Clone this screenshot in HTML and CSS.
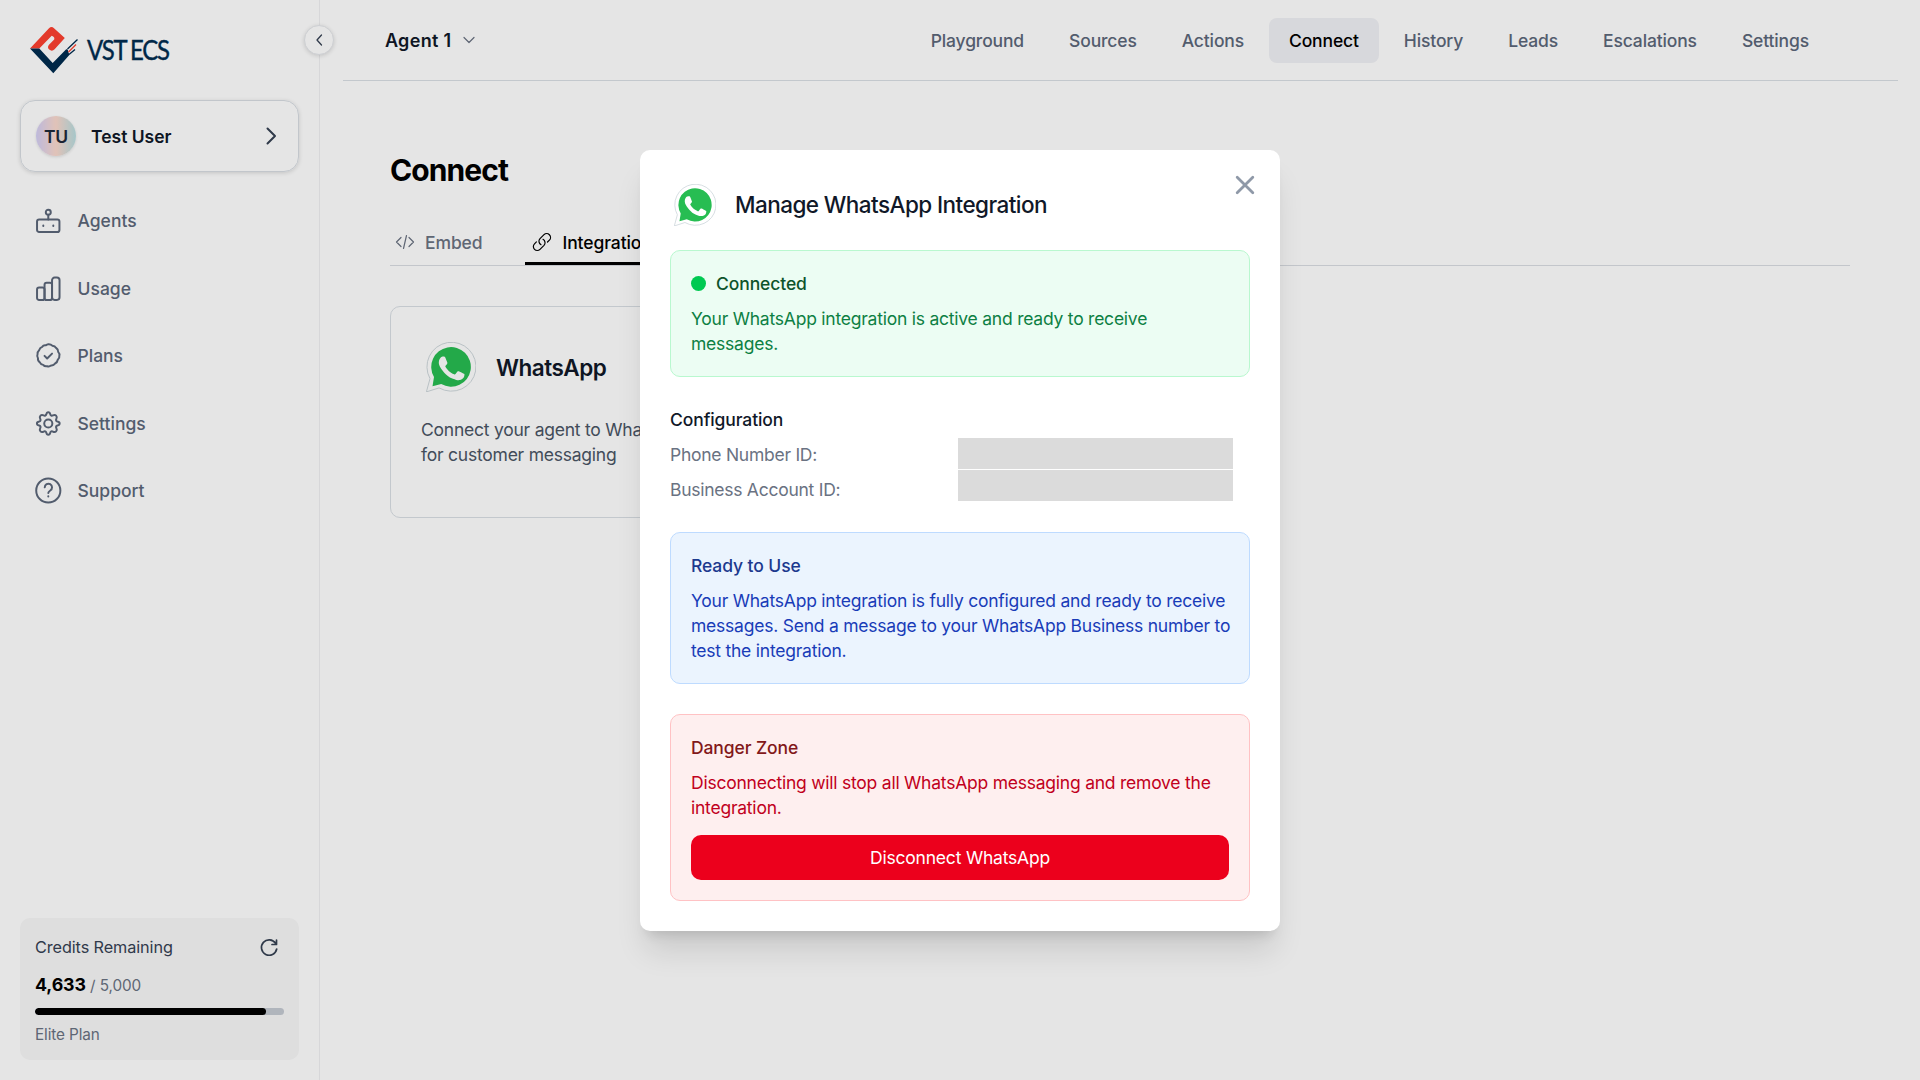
FILE: index.html
```html
<!DOCTYPE html>
<html lang="en">
<head>
  <meta charset="UTF-8">
  <meta name="viewport" content="width=device-width, initial-scale=1.0">
  <title>Connect - Agent 1</title>
  <link rel="stylesheet" href="styles.css">
</head>
<body>
  <!-- shared whatsapp logo -->
  <svg width="0" height="0" class="defs">
    <symbol id="whatsapp" viewBox="0 0 50 50">
      <path d="M.5 49.5 4 36.6A24.5 24.5 0 1 1 13.4 46.1Z" fill="#fff" stroke="#cfd8dc"/>
      <path d="M6.500 44.300 8 35A19.800 19.800 0 1 1 15.200 42.100Z" fill="#27bd52"/>
      <path fill="#fff" fill-rule="evenodd" d="M19.300 15.500c-.500-1-1-1-1.400-1h-1.200c-.400 0-1.100.200-1.700.800-.600.600-2.200 2.100-2.200 5.200s2.300 6.100 2.600 6.500c.300.400 4.400 7 10.800 9.500 5.300 2.100 6.400 1.700 7.600 1.600 1.200-.100 3.700-1.500 4.200-3 .500-1.500.500-2.700.400-3-.200-.300-.600-.400-1.200-.700-.600-.300-3.700-1.800-4.300-2.100-.600-.200-1-.300-1.400.300-.400.600-1.600 2.100-2 2.500-.400.400-.700.500-1.400.200-.600-.300-2.700-1-5.100-3.100-1.900-1.700-3.200-3.800-3.500-4.400-.400-.600 0-1 .300-1.300.300-.300.600-.700.900-1.100.300-.400.400-.600.600-1 .200-.400.100-.800-.100-1.100-.100-.300-1.400-3.400-1.900-4.800Z"/>
    </symbol>
  </svg>

  <div class="layout">
    <aside class="sidebar">
      <button class="collapse"><svg width="16" height="16" viewBox="0 0 16 16"><path d="M10.500 3 6 8l4.500 5"/></svg></button>

      <div class="logo">
        <svg width="48" height="48" viewBox="0 0 48 48">
          <path fill="#fd4130" d="M0 22.500 19 2.200Q21.500 0 24 2.200L34.800 12 24.600 23.300Q22 26 19.200 23.600 16.900 21.300 19 18.800L24.200 13.500Q25 11 21.700 9.800L9.300 22.500Z"/>
          <path fill="#002c50" d="M0 22.500H9.300L22.700 37 36.200 23.300Q38 23 38 24.500L39.300 29 23.300 47.300Z"/>
          <path stroke="#002c50" stroke-width="1.300" d="M37.500 23 47.500 13.500M39 28.500 45 23.500"/>
          <path stroke="#fd4130" stroke-width="1.300" d="M38.500 26 46 18.500"/>
        </svg>
        <span class="logo-text">VST<i></i>ECS</span>
      </div>

      <div class="user">
        <span class="avatar">TU</span>
        <span class="user-name">Test User</span>
        <svg width="12" height="18" viewBox="0 0 12 18"><path d="m2.500 1.500 7.500 7.500-7.500 7.500"/></svg>
      </div>

      <nav class="menu">
        <a class="menu-item"><svg viewBox="0 0 24 24"><rect x="1" y="11" width="21.500" height="12" rx="2"/><path d="M11.800 11V6.500M7 16.700v.600M16.600 16.700v.600"/><circle cx="11.800" cy="4" r="2.400"/></svg>Agents</a>
        <a class="menu-item"><svg viewBox="0 0 24 24"><rect x="1" y="11" width="7.200" height="12" rx="2"/><rect x="8.200" y="6.500" width="7.200" height="16.500" rx="2"/><rect x="15.400" y="1.500" width="7.200" height="21.500" rx="2.500"/></svg>Usage</a>
        <a class="menu-item"><svg viewBox="0 0 24 24"><path d="m8.200 12.400 2.500 2.500 4.700-4.700"/><path d="M11.800 1.200Q14.200 1 15.600 2.600 18.200 2.800 19.300 4.700 21.500 6.200 21.300 8.500 23.100 10.400 22.400 12.300 22.800 14.500 20.900 16.100 20.500 18.700 18.300 19.700 16.900 21.800 14.500 21.500 12.800 23.100 10.800 22.300 8.300 22.800 6.900 21 4.500 20.600 3.500 18.400 1.500 17.100 1.900 14.600.600 12.700 1.500 10.700 1.200 8.500 3 6.900 3.700 4.500 5.900 3.700 7.300 1.700 9.500 2.200 10.500 1.300 11.800 1.200Z"/></svg>Plans</a>
        <a class="menu-item"><svg viewBox="0 0 24 24"><circle cx="11.800" cy="12" r="3.900"/><path d="M9.900 3.200C10.400.400 13.200.400 13.700 3.200 14 4.500 15.100 4.900 16.200 4.300 18.700 2.900 20.900 5.100 19.500 7.600 18.900 8.700 19.300 9.800 20.600 10.100 23.400 10.600 23.400 13.400 20.600 13.900 19.300 14.200 18.900 15.300 19.500 16.400 20.900 18.900 18.700 21.100 16.200 19.700 15.100 19.100 14 19.500 13.700 20.800 13.200 23.600 10.400 23.600 9.900 20.800 9.600 19.500 8.500 19.100 7.400 19.700 4.900 21.100 2.700 18.900 4.100 16.400 4.700 15.300 4.300 14.200 3 13.900.200 13.400.200 10.600 3 10.100 4.300 9.800 4.700 8.700 4.100 7.600 2.700 5.100 4.900 2.900 7.400 4.300 8.500 4.900 9.600 4.500 9.900 3.200Z"/></svg>Settings</a>
        <a class="menu-item"><svg viewBox="0 0 24 24"><circle cx="11.800" cy="12" r="11.600"/><path d="M8.400 9a3.500 3.500 0 1 1 5.300 3c-1.100.700-1.900 1.300-1.900 2.500M11.800 17.400v.300"/></svg>Support</a>
      </nav>

      <div class="credits">
        <div class="credits-head">
          Credits Remaining
          <svg width="20" height="20" viewBox="0 0 20 20"><path d="M16.600 5.300A7.700 7.700 0 1 0 17.700 11M17.500 2v4.500H13"/></svg>
        </div>
        <div class="credits-count"><b>4,633</b> / 5,000</div>
        <div class="bar"><div class="bar-fill" style="width: 92.66%"></div></div>
        <div class="plan">Elite Plan</div>
      </div>
    </aside>

    <main class="main">
      <header class="topbar">
        <div class="agent">Agent 1 <svg width="12" height="8" viewBox="0 0 12 8"><path d="m1 1.500 5 5 5-5"/></svg></div>
        <nav class="tabs">
          <a>Playground</a>
          <a>Sources</a>
          <a>Actions</a>
          <a class="active">Connect</a>
          <a>History</a>
          <a>Leads</a>
          <a>Escalations</a>
          <a>Settings</a>
        </nav>
      </header>

      <section class="content">
        <h1>Connect</h1>
        <div class="subtabs">
          <a class="subtab"><svg width="20" height="20" viewBox="0 0 20 20"><path d="M6 5.500 1.500 10 6 14.500M14 5.500l4.500 4.500-4.500 4.500M11.500 3.500l-3 13"/></svg>Embed</a>
          <a class="subtab active"><svg width="20" height="20" viewBox="0 0 20 20"><path d="M11 7.300a3.800 3.800 0 0 1 1 6L8 17.300a3.800 3.800 0 0 1-5.500-5.500l1.900-1.900M15.500 10l1.900-1.900a3.800 3.800 0 0 0-5.400-5.400L8 6.700a3.800 3.800 0 0 0 1 6"/></svg>Integrations</a>
        </div>

        <div class="grid">
          <div class="card">
            <div class="card-head">
              <svg width="50" height="50"><use href="#whatsapp"/></svg>
              <h3>WhatsApp</h3>
            </div>
            <p>Connect your agent to WhatsApp for customer messaging</p>
          </div>
        </div>
      </section>
    </main>
  </div>

  <div class="overlay">
    <div class="modal">
      <button class="close"><svg width="20" height="20" viewBox="0 0 20 20"><path d="m2.200 2.200 15.600 15.600M17.800 2.200 2.200 17.800"/></svg></button>
      <div class="modal-head">
        <svg width="42" height="42"><use href="#whatsapp"/></svg>
        <h2>Manage WhatsApp Integration</h2>
      </div>

      <div class="box green">
        <h4><span class="dot"></span>Connected</h4>
        <p>Your WhatsApp integration is active and ready to receive messages.</p>
      </div>

      <div class="config">
        <h4>Configuration</h4>
        <div class="config-body">
          <div class="labels">
            <span>Phone Number ID:</span>
            <span>Business Account ID:</span>
          </div>
          <div class="values">
            <span></span>
            <span></span>
          </div>
        </div>
      </div>

      <div class="box blue">
        <h4>Ready to Use</h4>
        <p>Your WhatsApp integration is fully configured and ready to receive messages. Send a message to your WhatsApp Business number to test the integration.</p>
      </div>

      <div class="box red">
        <h4>Danger Zone</h4>
        <p>Disconnecting will stop all WhatsApp messaging and remove the integration.</p>
        <button class="disconnect">Disconnect WhatsApp</button>
      </div>
    </div>
  </div>
</body>
</html>
```

FILE: styles.css
```css
* {
  box-sizing: border-box;
  margin: 0;
  padding: 0;
}
body {
  font-family: Inter, 'Liberation Sans', sans-serif;
  font-size: 17.5px;
  line-height: 25px;
  letter-spacing: -0.1px;
  color: #101828;
  background: #fff;
  height: 100vh;
  overflow: hidden;
}
svg {
  fill: none;
  stroke-linecap: round;
  stroke-linejoin: round;
  flex-shrink: 0;
}
button {
  font: inherit;
  letter-spacing: inherit;
  border: none;
  cursor: pointer;
}
p {
  letter-spacing: -0.23px;
}
.defs {
  position: absolute;
}
.layout {
  display: flex;
  height: 100vh;
}

/* sidebar */
.sidebar {
  position: relative;
  width: 320px;
  padding: 26px 20px 20px;
  border-right: 1px solid #f0f0f2;
  display: flex;
  flex-direction: column;
}
.collapse {
  position: absolute;
  top: 25px;
  right: -15px;
  width: 30px;
  height: 30px;
  border: 1px solid #e5e7eb;
  border-radius: 50%;
  background: #fff;
  box-shadow: 0 1px 4px rgba(0, 0, 0, 0.15);
  display: flex;
  align-items: center;
  justify-content: center;
}
.collapse svg {
  stroke: #364153;
  stroke-width: 1.3;
}
.logo {
  display: flex;
  align-items: center;
  height: 48px;
  padding-left: 10px;
  gap: 9px;
}
.logo svg {
  stroke-linecap: butt;
}
.logo-text {
  font-family: Lato, sans-serif;
  font-size: 26px;
  letter-spacing: -1.3px;
  color: #002c50;
  -webkit-text-stroke: 0.4px #002c50;
  padding-top: 1px;
  transform: scaleX(0.92);
  transform-origin: left;
}
.logo-text i {
  display: inline-block;
  width: 4px;
}
.user {
  margin-top: 26px;
  height: 72px;
  border: 1px solid #d8dde3;
  border-radius: 15px;
  box-shadow: 0 1px 4px rgba(0, 0, 0, 0.15);
  display: flex;
  align-items: center;
  padding: 0 21px 0 15px;
}
.user svg {
  stroke: #364153;
  stroke-width: 2;
}
.avatar {
  width: 40px;
  height: 40px;
  border-radius: 50%;
  background: linear-gradient(90deg, #d3cff5, #fbd9cd 50%, #b9dde0);
  box-shadow: 0 1px 3px rgba(0, 0, 0, 0.12);
  color: #1e2939;
  font-weight: 600;
  display: flex;
  align-items: center;
  justify-content: center;
}
.user-name {
  flex: 1;
  margin-left: 15px;
  font-weight: 600;
  letter-spacing: 0;
}
.menu {
  margin-top: 26.5px;
  display: flex;
  flex-direction: column;
  gap: 23.5px;
}
.menu-item {
  height: 44px;
  padding-left: 16px;
  display: flex;
  align-items: center;
  gap: 16.5px;
  color: #5c677a;
  font-weight: 500;
  letter-spacing: 0;
}
.menu-item svg {
  width: 25px;
  height: 25px;
  stroke: #5c677a;
  stroke-width: 1.9;
  overflow: visible;
}
.credits {
  margin-top: auto;
  height: 142px;
  background: #f8f8f8;
  border-radius: 10px;
  padding: 17px 15px 0;
}
.credits-head {
  display: flex;
  align-items: center;
  justify-content: space-between;
  padding-right: 5px;
  font-size: 16.25px;
  color: #364153;
}
.credits-head svg {
  stroke: #364153;
  stroke-width: 1.7;
}
.credits-count {
  margin-top: 12px;
  font-size: 15.3px;
  color: #6a7282;
}
.credits-count b {
  font-size: 17.8px;
  color: #000;
}
.bar {
  margin-top: 10px;
  height: 7px;
  border-radius: 4px;
  background: #c5cad2;
  overflow: hidden;
}
.bar-fill {
  height: 7px;
  border-radius: 4px;
  background: #000;
}
.plan {
  margin-top: 7px;
  font-size: 15.3px;
  color: #6a7282;
}

/* main */
.main {
  flex: 1;
}
.topbar {
  height: 81px;
  margin: 0 22px 0 23px;
  border-bottom: 1px solid #dadfe5;
  display: flex;
  align-items: center;
  justify-content: space-between;
  padding: 0 69px 0 42px;
}
.agent {
  font-size: 18px;
  font-weight: 600;
  letter-spacing: 0.3px;
  display: flex;
  align-items: center;
  gap: 12px;
}
.agent svg {
  stroke: #6a7282;
  stroke-width: 1.2;
}
.tabs {
  display: flex;
  gap: 5px;
  letter-spacing: -0.14px;
}
.tabs a {
  padding: 10px 20px;
  border-radius: 8px;
  color: #5c677a;
  font-weight: 500;
}
.tabs .active {
  background: #f0f1f5;
  color: #000;
}
.content {
  padding: 70px 70px 0;
}
h1 {
  font-size: 30px;
  line-height: 38px;
  font-weight: 700;
  letter-spacing: -0.9px;
  color: #000;
}
.subtabs {
  margin-top: 30px;
  height: 47px;
  border-bottom: 1px solid #dadde2;
  display: flex;
  gap: 37px;
}
.subtab {
  display: flex;
  align-items: center;
  gap: 10px;
  padding: 3px 5px 0;
  height: 46px;
  font-weight: 500;
  color: #6a7282;
  border-bottom: 3px solid transparent;
}
.subtab svg {
  stroke: currentColor;
  stroke-width: 1.2;
}
.subtab.active {
  color: #000;
  border-color: #000;
  padding-left: 7px;
  gap: 11px;
}
.grid {
  margin-top: 40px;
  display: grid;
  grid-template-columns: repeat(4, 1fr);
  gap: 30px;
}
.card {
  height: 212px;
  border: 1px solid #dadfe5;
  border-radius: 10px;
  padding: 30px;
}
.card-head {
  display: flex;
  align-items: center;
  gap: 20px;
  height: 60px;
  padding-left: 5px;
}
.card h3 {
  font-size: 22.5px;
  font-weight: 600;
  letter-spacing: -0.5px;
}
.card p {
  margin-top: 20px;
  color: #4a5565;
}

/* modal */
.overlay {
  position: absolute;
  inset: 0;
  background: rgba(0, 0, 0, 0.1);
  display: flex;
  align-items: center;
  justify-content: center;
}
.modal {
  position: relative;
  width: 640px;
  padding: 30px;
  background: #fff;
  border-radius: 10px;
  box-shadow: 0 25px 31px -6px rgba(0, 0, 0, 0.12), 0 10px 12px -7px rgba(0, 0, 0, 0.12);
}
.close {
  position: absolute;
  top: 25px;
  right: 25px;
  width: 20px;
  height: 20px;
  background: none;
}
.close svg {
  display: block;
  stroke: #8f99a8;
  stroke-width: 2.8;
}
.modal-head {
  height: 50px;
  display: flex;
  align-items: center;
  padding-left: 4px;
  gap: 19px;
  margin-bottom: 20px;
}
.modal-head h2 {
  font-size: 22.5px;
  font-weight: 500;
  letter-spacing: -0.56px;
}
h4 {
  font-size: 17.5px;
  font-weight: 500;
  margin-bottom: 10px;
}
.box {
  padding: 20px;
  border: 1px solid;
  border-radius: 10px;
}
.box p {
  margin-right: -5px;
}
.green {
  background: #ecfdf3;
  border-color: #b9f8cf;
  color: #0d8043;
}
.green h4 {
  display: flex;
  align-items: center;
  gap: 10px;
  color: #0d542b;
}
.dot {
  width: 15px;
  height: 15px;
  border-radius: 50%;
  background: #00c951;
}
.config {
  margin: 30px 0;
}
.config-body {
  display: flex;
  justify-content: space-between;
  height: 60px;
}
.labels {
  display: flex;
  flex-direction: column;
  gap: 10px;
  color: #6a7282;
  letter-spacing: -0.26px;
}
.values {
  display: flex;
  flex-direction: column;
  gap: 1px;
  margin: -4px 17px 0 0;
}
.values span {
  width: 275px;
  height: 31px;
  background: #dbdbdb;
}
.blue {
  background: #ebf4fe;
  border-color: #bedbff;
  color: #193cb8;
}
.blue h4 {
  color: #1c398e;
}
.red {
  margin-top: 30px;
  background: #feefef;
  border-color: #ffc2c4;
  color: #c10020;
}
.red h4 {
  color: #82181a;
}
.disconnect {
  display: block;
  width: 100%;
  height: 45px;
  margin-top: 15px;
  border-radius: 10px;
  background: #ec001c;
  color: #fff;
  letter-spacing: -0.2px;
}
```
